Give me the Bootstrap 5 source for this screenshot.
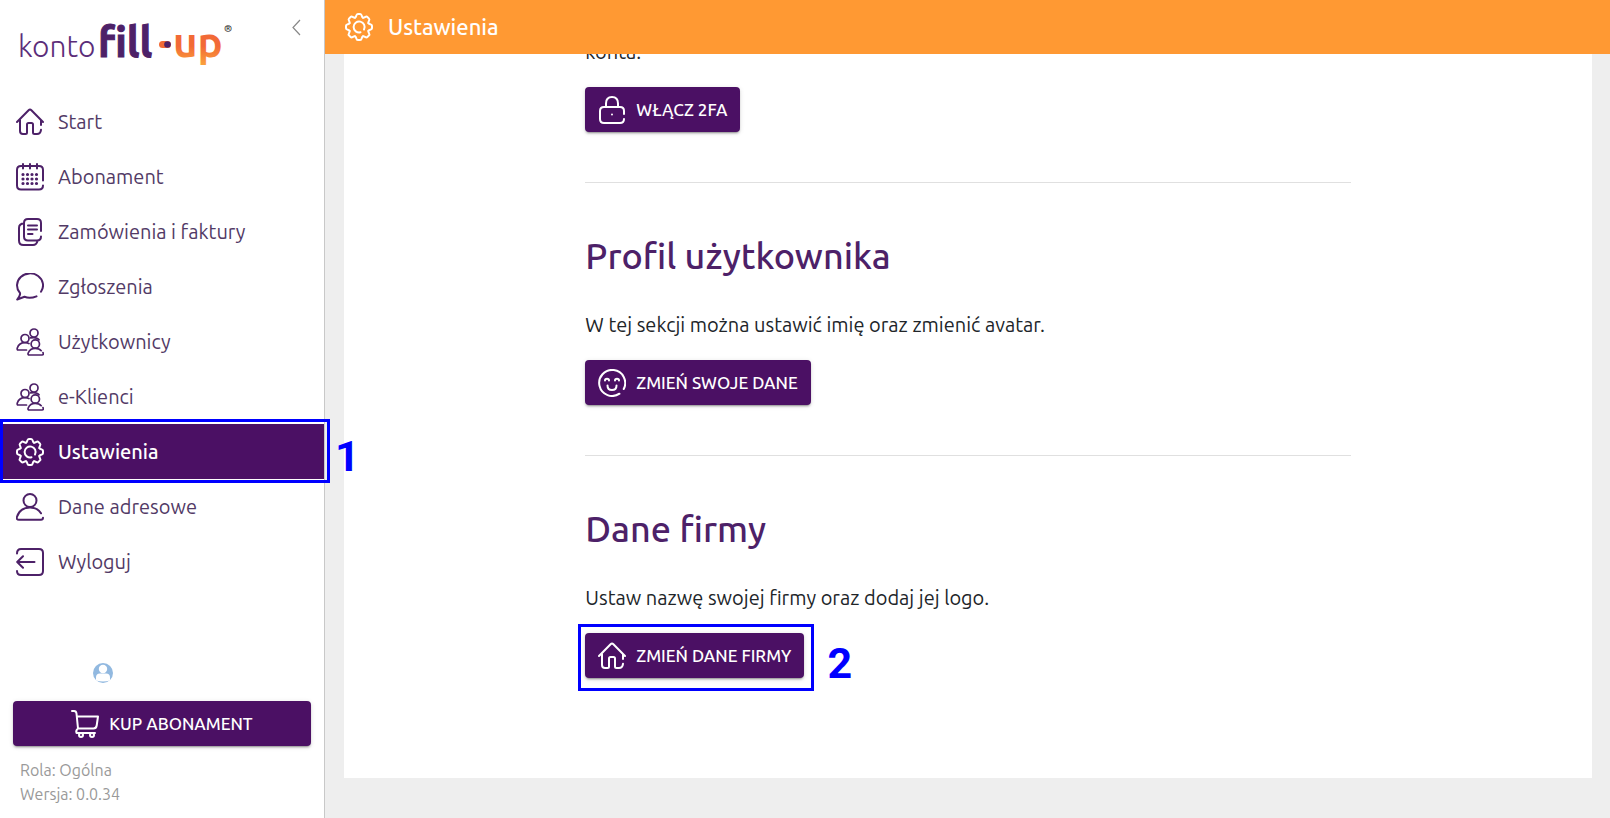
<!DOCTYPE html>
<html lang="pl">
<head>
<meta charset="utf-8">
<meta name="viewport" content="width=device-width, initial-scale=1">
<title>Ustawienia – konto fill-up</title>
<link href="https://cdn.jsdelivr.net/npm/bootstrap@5.3.0/dist/css/bootstrap.min.css" rel="stylesheet">
<style>
  :root { --plum: #4b1064; --plum-ink: #4d2168; --mark-blue: #0000ff; }
  body { font-family: Ubuntu, "Noto Sans", sans-serif; font-size: 20px; line-height: 30px; color: #212529; background: #eee; }
  .ico { width: 28px; height: 28px; flex: none; fill: none; stroke: currentColor; stroke-width: 2; stroke-linecap: round; stroke-linejoin: round; }
  .side { width: 325px; border-right: 1px solid #c8c8c8; }
  .side-top { height: 94px; padding: 16px 20px 0 18px; }
  .brand-logo { width: 220px; height: 56px; }
  .collapse-btn { width: 16px; height: 24px; color: #888; }
  .side .nav-link { height: 55px; padding: 0 16px; gap: 14px; color: #523a66; }
  .side .nav-link .ico { color: var(--plum-ink); }
  .side .nav-link.active, .side .nav-link.active .ico { color: #fff; }
  .side .nav-link.active { background: var(--plum); font-weight: 500; }
  .side-foot { padding: 0 13px 12px; }
  .avatar { width: 20px; height: 20px; margin: 0 0 18px 80px; }
  .side-meta { padding: 12px 7px 0; font-size: 16px; line-height: 24px; color: #999; }
  .btn-plum { --bs-btn-color: #fff; --bs-btn-bg: var(--plum); --bs-btn-hover-color: #fff; --bs-btn-hover-bg: #5d1a7a; --bs-btn-active-color: #fff; --bs-btn-active-bg: #3a0b4e;
    --bs-btn-font-size: 17px; --bs-btn-font-weight: 500; --bs-btn-border-radius: 4px; --bs-btn-border-width: 0; --bs-btn-padding-x: 13px; --bs-btn-padding-y: 0;
    height: 45px; box-shadow: 0 3px 1px -2px rgba(0,0,0,.2), 0 2px 2px rgba(0,0,0,.14), 0 1px 5px rgba(0,0,0,.12); }
  .gap-btn { gap: 10px; }
  .topbar { height: 54px; padding: 0 20px; gap: 15px; background: #ff9933; color: #fff; font-size: 22px; font-weight: 500; }
  .scroller { padding: 0 18px 40px 19px; }
  .sheet { padding: 32px 32px 100px; }
  .sheet p { margin-bottom: 20px; }
  .sheet hr { margin: 50px 0 52px; border-top: 1px solid #ccc; opacity: .6; }
  .sheet h2 { margin-bottom: 34px; font-size: 36px; line-height: 41px; font-weight: 500; color: var(--plum-ink); }
  .callout { position: absolute; border: 3px solid var(--mark-blue); pointer-events: none; z-index: 5; }
  .callout-nav { inset: -5px -6px -4px 0; }
  .callout-btn { inset: -9px -10px -13px -7px; }
  .callout span { position: absolute; left: 100%; top: 50%; margin: -19px 0 0 8px; font: 700 43px/48px Roboto, Arial, sans-serif; color: var(--mark-blue); }
  .callout-btn span { margin-left: 16px; }
</style>
</head>
<body class="vh-100 d-flex overflow-hidden">

<svg class="d-none" aria-hidden="true">
  <symbol id="i-home" viewBox="0 0 28 28"><path d="M1 14 12.6 2.2q1.4-1.4 2.8 0L27 14M4 12v11q0 3 3 3h2.500q1.500 0 1.500-1.500V16.500q0-1.500 1.500-1.500h3q1.500 0 1.500 1.500v8q0 1.500 1.500 1.500H21q3.500 0 4-4.200M25 12.500v4.500"/></symbol>
  <symbol id="i-calendar" viewBox="0 0 28 28"><path d="M27 17.500V7q0-4-4-4H5Q1 3 1 7v15.500q0 4 4 4h18q4 0 4-4M7 1v4.500M14 1v4.500M21 1v4.500"/><path stroke-width="3.200" d="M7 11.500h0M11.500 11.500h0M16 11.500h0M20.500 11.500h0M7 16h0M11.500 16h0M16 16h0M20.500 16h0M7 20.500h0M11.500 20.500h0M16 20.500h0M20.500 20.500h0"/></symbol>
  <symbol id="i-docs" viewBox="0 0 28 28"><path d="M25 13V5q0-4-4-4h-9Q8 1 8 5v13.500q0 4 4 4h9q4 0 4-4M8 5.500Q3 5.500 3 10v12.500Q3 27 7.500 27H17q3.500 0 4.500-4M12 7.500h9M12 11.500h9M12 16h4.500"/></symbol>
  <symbol id="i-chat" viewBox="0 0 28 28"><path d="M25 18.800A13 12 0 1 0 4 20q.7 2-2.800 6.500l7.300-2.700Q14 26 20.500 23.300"/></symbol>
  <symbol id="i-users" viewBox="0 0 28 28"><g stroke-width="1.700"><circle cx="18" cy="5" r="4"/><circle cx="9" cy="10.500" r="4"/><circle cx="19.300" cy="16" r="4.200"/><path d="M14.500 9.800q6.500-1 8.500 2M10.500 22H2.300q-1.500 0-1-2Q3 14.600 9 14.600q2.500 0 4 1M27 24.600q1 2.400-1 2.400H13.500q-2 0-1.300-2 1.800-4.700 7-4.700 4 0 6 2.400"/></g></symbol>
  <symbol id="i-gear" viewBox="0 0 28 28"><g transform="translate(14 14)"><g id="gear-half"><path id="tooth" d="M-3.900-9.400C-2.300-10-3.200-13-1.200-13H1.200C3.200-13 2.300-10 3.900-9.400"/><use href="#tooth" transform="rotate(45)"/><use href="#tooth" transform="rotate(90)"/><use href="#tooth" transform="rotate(135)"/></g><use href="#gear-half" transform="rotate(180)"/><path d="M5 2.500A5.500 5.500 0 1 0 1.500 5.300"/></g></symbol>
  <symbol id="i-person" viewBox="0 0 28 28"><circle cx="14" cy="7.500" r="6.500"/><path d="M27 24.800q0 2-2 2H3q-3 0-2-3 3-9.300 13-9.300 7.500 0 11 5.800"/></symbol>
  <symbol id="i-logout" viewBox="0 0 28 28"><path d="M1 5.500Q1 1 5 1h18q4 0 4 4v18q0 4-4 4H5q-4 0-4-4M3 14h15.500M7 8.300 1.200 14 7 19.700"/></symbol>
  <symbol id="i-lock" viewBox="0 0 28 28"><path d="M26 18v-3q0-4-4-4H6q-4 0-4 4v8q0 4 4 4h16q4 0 4-4M8 11V7.500Q8 1 14 1t6 6.500V11M14 18.500h0"/></symbol>
  <symbol id="i-smile" viewBox="0 0 28 28"><path d="M21.500 24.700A13 13 0 1 1 25.700 20M7 11.500q0-1.800 2-1.800t2 1.800M17 11.500q0-1.800 2-1.800t2 1.800M9.500 16.500q0 4.500 4.500 4.500t4.500-4.500"/></symbol>
  <symbol id="i-cart" viewBox="0 0 28 28"><path d="M1 1h2q2.200 0 2.500 2.500L7 18.500M5.800 6.500H27l-1.300 9q-.5 3-3.200 3H7q-2.500 2-1.500 4.500H24"/><circle cx="10" cy="25" r="2"/><circle cx="21" cy="25" r="2"/></symbol>
</svg>

<aside class="side bg-white d-flex flex-column flex-shrink-0 h-100">
  <div class="side-top d-flex justify-content-between align-items-start">
    <a href="#" aria-label="konto fill-up">
      <svg class="brand-logo" viewBox="0 0 220 56" font-family='Ubuntu, "Noto Sans", sans-serif'>
        <defs><linearGradient id="up-fill" x1="0" y1="0" x2="0" y2="1"><stop offset=".6" stop-color="#f26a36"/><stop offset="1" stop-color="#fba23c"/></linearGradient></defs>
        <text x="0" y="41" font-size="30" font-weight="300" fill="#5b2d79">konto</text>
        <text x="80" y="41" font-size="42" font-weight="700" fill="#4d2168" stroke="#4d2168">fill</text>
        <rect x="141" y="25" width="12" height="7" rx="3.500" fill="#f26a36"/><circle cx="149.500" cy="28.500" r="3.300" fill="#4d2168"/>
        <text x="155" y="41" font-size="42" font-weight="700" fill="url(#up-fill)">up</text>
        <text x="206" y="16" font-size="10" font-weight="500" fill="#333">®</text>
      </svg>
    </a>
    <button class="collapse-btn btn p-0 border-0 d-flex" type="button" aria-label="Zwiń menu">
      <svg viewBox="0 0 16 24" width="16" height="24" fill="none" stroke="currentColor" stroke-width="1.200"><path d="M12 4 5 11.500 12 19"/></svg>
    </button>
  </div>

  <nav class="nav flex-column flex-nowrap">
    <a class="nav-link d-flex align-items-center" href="#"><svg class="ico"><use href="#i-home"/></svg>Start</a>
    <a class="nav-link d-flex align-items-center" href="#"><svg class="ico"><use href="#i-calendar"/></svg>Abonament</a>
    <a class="nav-link d-flex align-items-center" href="#"><svg class="ico"><use href="#i-docs"/></svg>Zamówienia i faktury</a>
    <a class="nav-link d-flex align-items-center" href="#"><svg class="ico"><use href="#i-chat"/></svg>Zgłoszenia</a>
    <a class="nav-link d-flex align-items-center" href="#"><svg class="ico"><use href="#i-users"/></svg>Użytkownicy</a>
    <a class="nav-link d-flex align-items-center" href="#"><svg class="ico"><use href="#i-users"/></svg>e-Klienci</a>
    <div class="position-relative">
      <a class="nav-link active d-flex align-items-center" href="#" aria-current="page"><svg class="ico"><use href="#i-gear"/></svg>Ustawienia</a>
      <div class="callout callout-nav"><span>1</span></div>
    </div>
    <a class="nav-link d-flex align-items-center" href="#"><svg class="ico"><use href="#i-person"/></svg>Dane adresowe</a>
    <a class="nav-link d-flex align-items-center" href="#"><svg class="ico"><use href="#i-logout"/></svg>Wyloguj</a>
  </nav>

  <div class="side-foot mt-auto">
    <svg class="avatar d-block" viewBox="0 0 20 20"><circle cx="10" cy="10" r="10" fill="#92b9e0"/><circle cx="10" cy="6" r="4.200" fill="#fff"/><path d="M3 17.500v-3q0-4 4-4h6q4 0 4 4v3q-7 2-14 0z" fill="#fff"/></svg>
    <button class="btn btn-plum w-100 d-flex align-items-center justify-content-center gap-btn" type="button"><svg class="ico"><use href="#i-cart"/></svg>KUP ABONAMENT</button>
    <div class="side-meta">
      <div>Rola: Ogólna</div>
      <div>Wersja: 0.0.34</div>
    </div>
  </div>
</aside>

<div class="flex-grow-1 d-flex flex-column h-100">
  <header class="topbar d-flex align-items-center flex-shrink-0"><svg class="ico"><use href="#i-gear"/></svg>Ustawienia</header>

  <main class="scroller flex-grow-1 d-flex flex-column justify-content-end overflow-hidden">
    <div class="sheet bg-white flex-shrink-0">
      <div class="row gx-0 justify-content-center">
        <div class="col-8">
          <div class="mx-2 px-1">
            <section>
              <p>konta.</p>
              <button class="btn btn-plum d-flex align-items-center gap-btn" type="button"><svg class="ico"><use href="#i-lock"/></svg>WŁĄCZ 2FA</button>
            </section>
            <hr>
            <section>
              <h2>Profil użytkownika</h2>
              <p>W tej sekcji można ustawić imię oraz zmienić avatar.</p>
              <button class="btn btn-plum d-flex align-items-center gap-btn" type="button"><svg class="ico"><use href="#i-smile"/></svg>ZMIEŃ SWOJE DANE</button>
            </section>
            <hr>
            <section>
              <h2>Dane firmy</h2>
              <p>Ustaw nazwę swojej firmy oraz dodaj jej logo.</p>
              <div class="d-flex">
                <div class="position-relative">
                  <button class="btn btn-plum d-flex align-items-center gap-btn" type="button"><svg class="ico"><use href="#i-home"/></svg>ZMIEŃ DANE FIRMY</button>
                  <div class="callout callout-btn"><span>2</span></div>
                </div>
              </div>
            </section>
          </div>
        </div>
      </div>
    </div>
  </main>
</div>

<script src="https://cdn.jsdelivr.net/npm/bootstrap@5.3.0/dist/js/bootstrap.bundle.min.js"></script>
</body>
</html>
